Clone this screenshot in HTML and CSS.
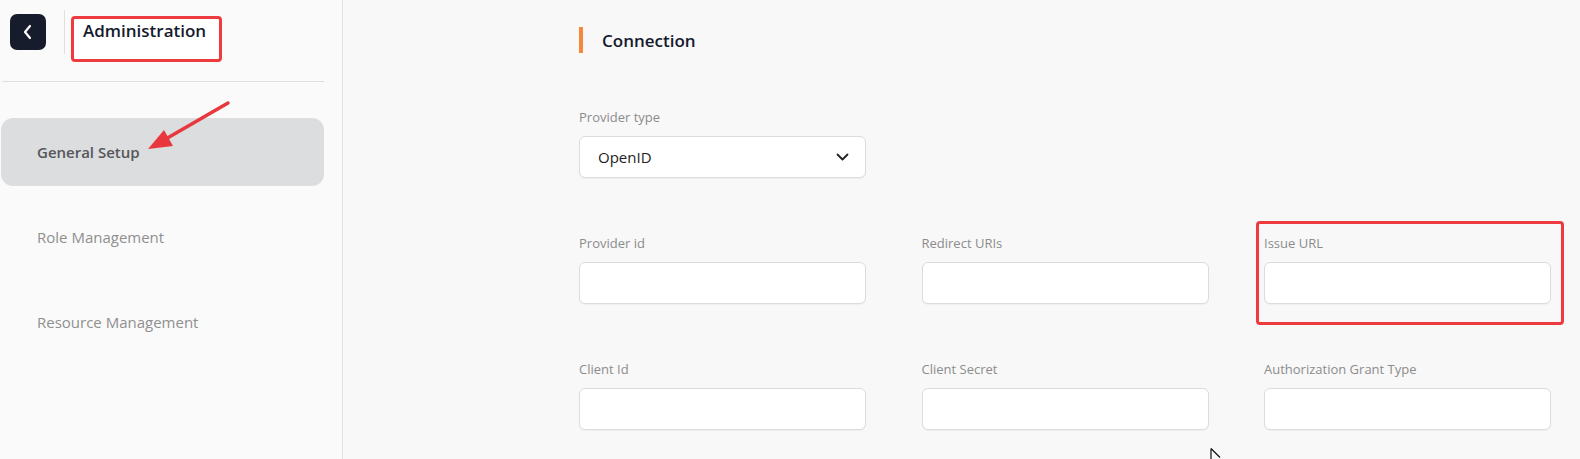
FILE: index.html
```html
<!DOCTYPE html>
<html lang="en">
<head>
<meta charset="utf-8">
<title>Administration</title>
<link rel="stylesheet" href="styles.css">
</head>
<body>
<div class="app">
  <aside class="sidebar">
    <div class="side-head">
      <button class="back" aria-label="Back">
        <svg width="12" height="16" viewBox="0 0 12 16"><path d="M8 2 L3 8 L8 14" fill="none" stroke="#fff" stroke-width="2.2" stroke-linecap="round" stroke-linejoin="round"/></svg>
      </button>
      <span class="vdiv"></span>
      <h1 class="title">Administration</h1>
    </div>
    <hr class="side-rule">
    <nav class="nav">
      <a class="nav-item active">General Setup</a>
      <a class="nav-item">Role Management</a>
      <a class="nav-item">Resource Management</a>
    </nav>
    <svg class="annot-arrow" width="100" height="70" viewBox="140 95 100 70">
      <line x1="228" y1="103" x2="164" y2="140" stroke="#e8383d" stroke-width="3.5" stroke-linecap="round"/>
      <polygon points="148,149 164,130 173,146" fill="#e8383d"/>
    </svg>
  </aside>
  <main class="main">
    <h2 class="section-title">Connection</h2>
    <div class="form">
      <div class="field">
        <label class="lbl">Provider type</label>
        <div class="select">
          <span>OpenID</span>
          <svg width="13" height="8" viewBox="0 0 13 8"><path d="M1.5 1.5 L6.5 6.5 L11.5 1.5" fill="none" stroke="#222" stroke-width="1.8" stroke-linecap="round" stroke-linejoin="round"/></svg>
        </div>
      </div>
      <div></div>
      <div></div>
      <div class="field">
        <label class="lbl">Provider id</label>
        <div class="input"></div>
      </div>
      <div class="field">
        <label class="lbl">Redirect URIs</label>
        <div class="input"></div>
      </div>
      <div class="field marked">
        <label class="lbl">Issue URL</label>
        <div class="input"></div>
        <span class="mark"></span>
      </div>
      <div class="field">
        <label class="lbl">Client Id</label>
        <div class="input"></div>
      </div>
      <div class="field">
        <label class="lbl">Client Secret</label>
        <div class="input"></div>
      </div>
      <div class="field">
        <label class="lbl">Authorization Grant Type</label>
        <div class="input"></div>
      </div>
    </div>
    <svg class="cursor" width="14" height="12" viewBox="0 0 14 12"><path d="M1 0.5 L1 12 M1 0.5 L10 9.5" fill="none" stroke="#111" stroke-width="1.2"/></svg>
  </main>
</div>
</body>
</html>
```

FILE: styles.css
```css
* { box-sizing: border-box; }
html, body { margin: 0; padding: 0; }
body {
  width: 1580px;
  height: 459px;
  overflow: hidden;
  background: #f8f8f8;
  font-family: "Open Sans", "Liberation Sans", sans-serif;
}
.app {
  display: flex;
  height: 459px;
}
.sidebar {
  position: relative;
  width: 343px;
  flex: none;
  background: #fafafa;
  border-right: 1px solid #e2e2e2;
  padding: 0 18px 0 1px;
}
.side-head {
  display: flex;
  align-items: center;
  height: 64px;
  padding-left: 9px;
}
.back {
  width: 36px;
  height: 36px;
  border: 0;
  border-radius: 7px;
  background: #161c2c;
  display: flex;
  align-items: center;
  justify-content: center;
  padding: 0;
}
.vdiv {
  width: 1px;
  height: 44px;
  background: #e0e0e0;
  margin-left: 18px;
}
.title {
  margin: 13px 0 0 6px;
  height: 46px;
  border: 3px solid #ee3b40;
  border-radius: 4px;
  padding: 1px 13px 0 9px;
  font-size: 17px;
  font-weight: 600;
  line-height: 22px;
  color: #151a2e;
  background: #fff;
}
.side-rule {
  margin: 17px 0 0 1px;
  border: 0;
  border-top: 1px solid #dedede;
}
.nav {
  display: flex;
  flex-direction: column;
  gap: 17px;
  margin-top: 36px;
}
.nav-item {
  display: flex;
  align-items: center;
  height: 68px;
  padding-left: 36px;
  border-radius: 12px;
  font-size: 15px;
  color: #8f8f8f;
}
.nav-item.active {
  background: #dcdddf;
  color: #555759;
  font-weight: 600;
}
.annot-arrow {
  position: absolute;
  left: 140px;
  top: 95px;
}
.main {
  position: relative;
  flex: 1;
  padding: 27px 0 0 236px;
}
.section-title {
  margin: 0;
  height: 26px;
  border-left: 4px solid #f5883a;
  padding-left: 19px;
  display: flex;
  align-items: center;
  font-size: 17px;
  font-weight: 600;
  color: #151a2e;
}
.form {
  display: grid;
  grid-template-columns: repeat(3, 287px);
  column-gap: 55.5px;
  row-gap: 56px;
  margin-top: 55px;
}
.field {
  display: flex;
  flex-direction: column;
  gap: 10px;
}
.lbl {
  font-size: 13px;
  line-height: 18px;
  color: #8c8c8c;
}
.input, .select {
  height: 42px;
  background: #fff;
  border: 1px solid #dcdcdc;
  border-radius: 6px;
  box-shadow: 0 1px 1px rgba(0,0,0,0.04);
}
.select {
  display: flex;
  align-items: center;
  justify-content: space-between;
  padding: 0 16px 0 18px;
  font-size: 15px;
  color: #222;
}
.marked { position: relative; }
.mark {
  position: absolute;
  left: -8px;
  top: -13px;
  right: -13px;
  bottom: -21px;
  border: 3.5px solid #ee3b40;
  border-radius: 4px;
}
.cursor {
  position: absolute;
  left: 867px;
  top: 448px;
}
```
